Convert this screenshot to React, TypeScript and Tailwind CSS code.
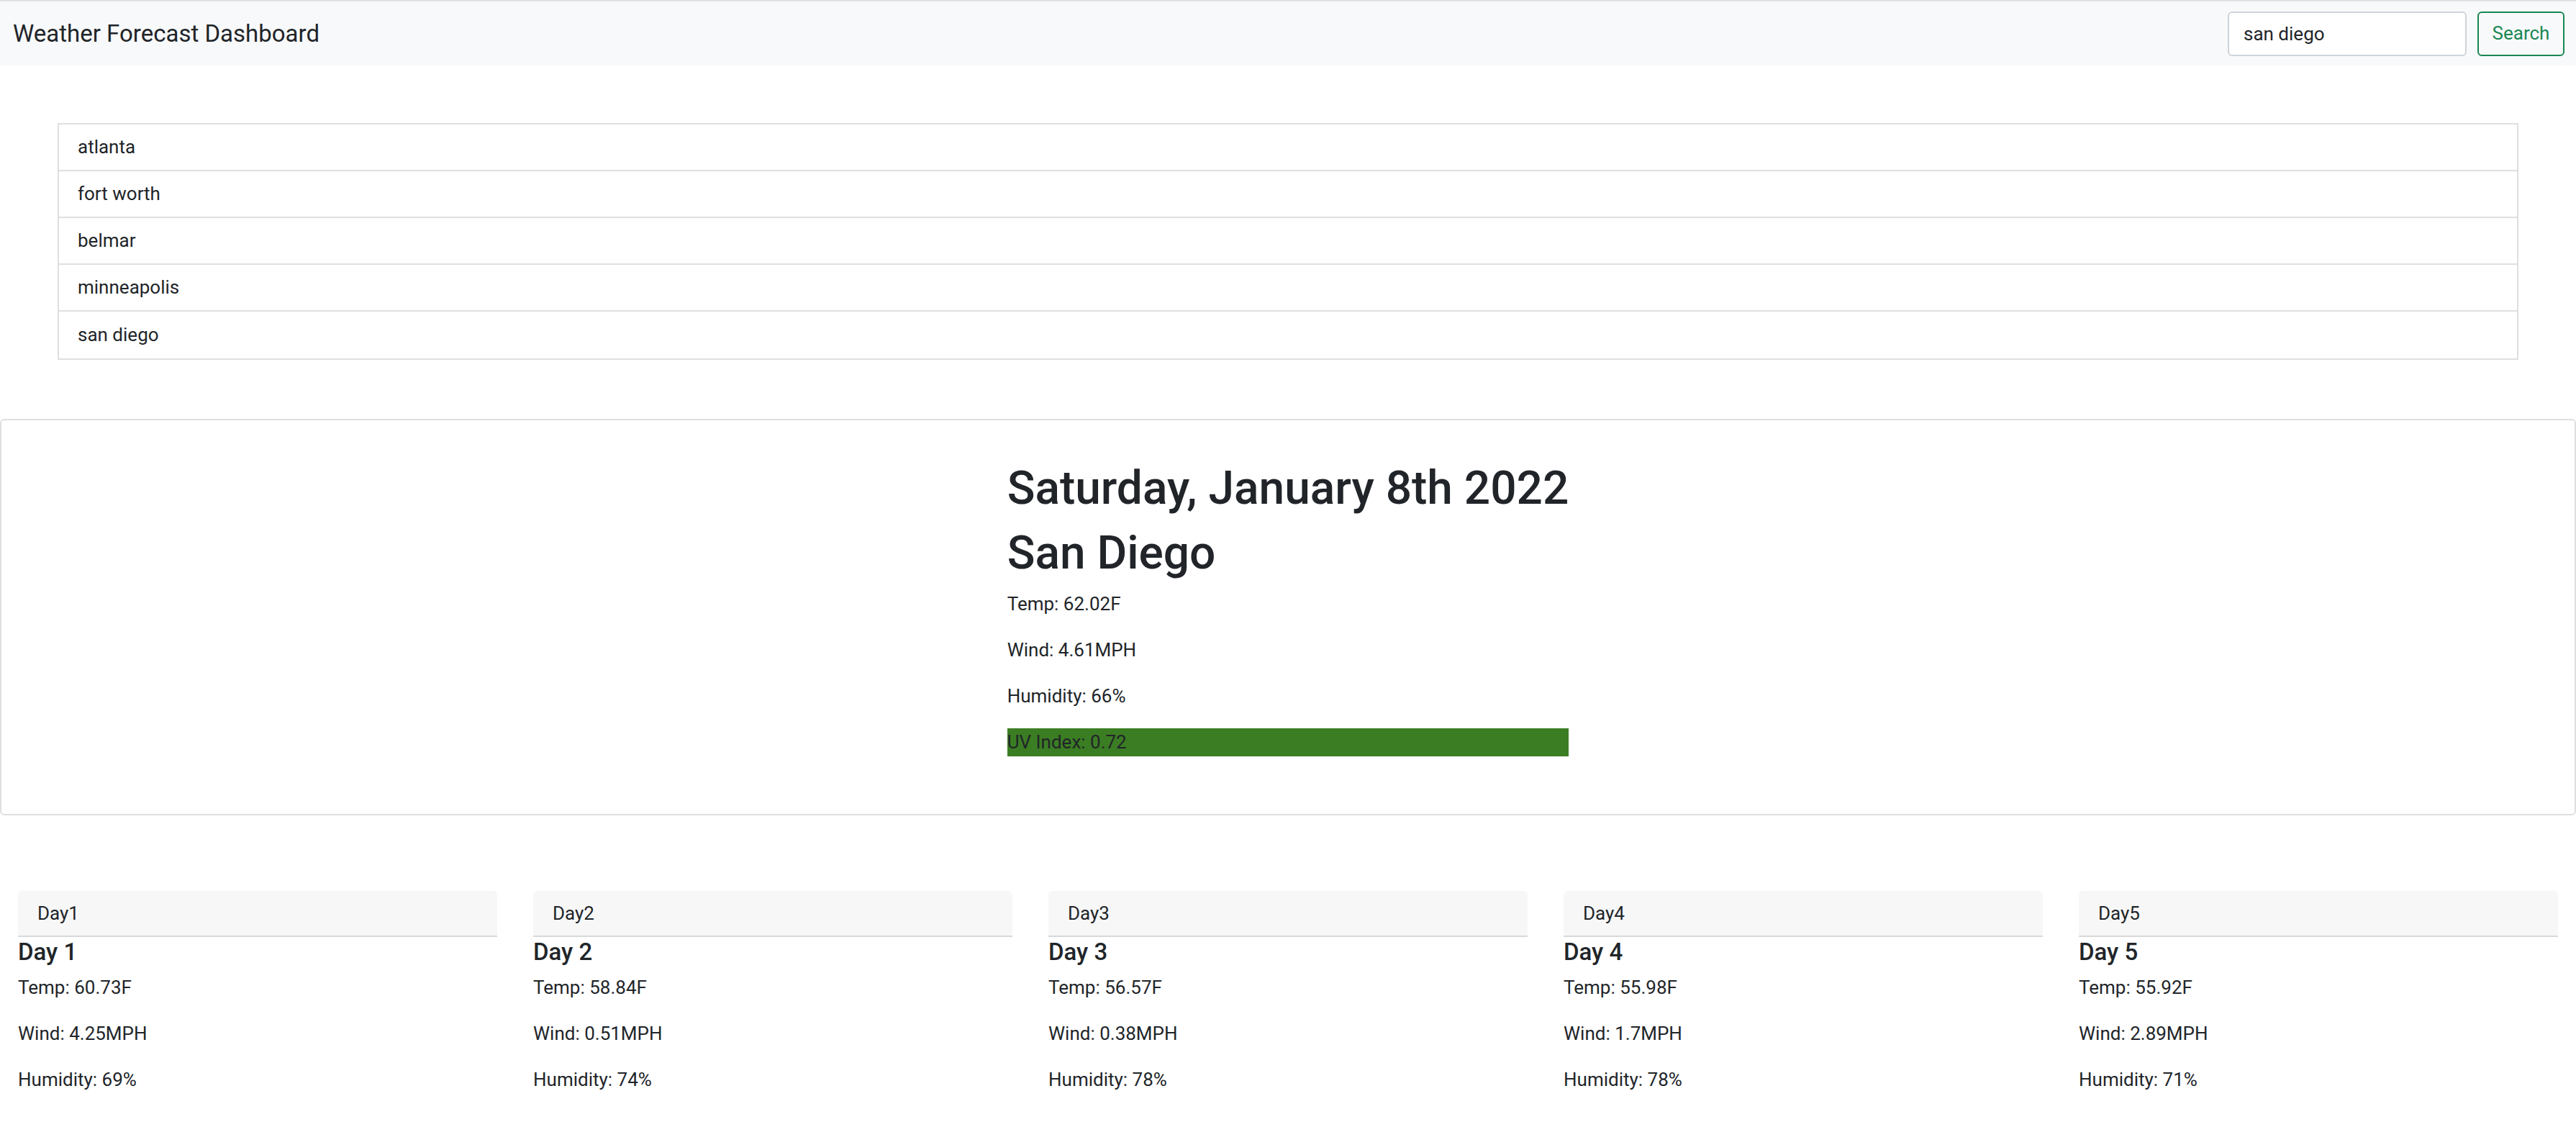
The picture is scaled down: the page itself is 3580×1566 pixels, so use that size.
import React from 'react';

interface Forecast {
  label: string;
  temp: string;
  wind: string;
  humidity: string;
}

const cities = ['atlanta', 'fort worth', 'belmar', 'minneapolis', 'san diego'];

const forecast: Forecast[] = [
  { label: '1', temp: '60.73F', wind: '4.25MPH', humidity: '69%' },
  { label: '2', temp: '58.84F', wind: '0.51MPH', humidity: '74%' },
  { label: '3', temp: '56.57F', wind: '0.38MPH', humidity: '78%' },
  { label: '4', temp: '55.98F', wind: '1.7MPH', humidity: '78%' },
  { label: '5', temp: '55.92F', wind: '2.89MPH', humidity: '71%' },
];

export default function App() {
  return (
    <div className="min-h-screen bg-white font-['Roboto',sans-serif] text-[#212529]">
      {/* Navbar */}
      <nav className="flex h-[91px] items-center justify-between border-t-2 border-[#dee2e6] bg-[#f8f9fa] pl-[18px] pr-[16px]">
        <span className="text-[33px] leading-none">Weather Forecast Dashboard</span>
        <form className="flex items-center gap-[15px]" onSubmit={(e) => e.preventDefault()}>
          <input
            readOnly
            value="san diego"
            className="h-[62px] w-[332px] rounded-[6px] border-2 border-[#ced4da] bg-white px-[20px] text-[26px] text-[#212529] outline-none"
          />
          <button
            type="submit"
            className="h-[62px] w-[121px] rounded-[6px] border-2 border-[#198754] text-[26px] text-[#198754]"
          >
            Search
          </button>
        </form>
      </nav>

      {/* Search history */}
      <ul className="mx-[80px] mt-[80px] border-2 border-[#dfdfdf]">
        {cities.map((city, i) => (
          <li
            key={city}
            className={`flex h-[65px] items-center px-[26px] text-[26px] ${i < cities.length - 1 ? 'border-b-2 border-[#dfdfdf]' : ''}`}
          >
            {city}
          </li>
        ))}
      </ul>

      {/* Current weather */}
      <section className="mt-[82px] flex justify-center rounded-[6px] border-2 border-[#dfdfdf] pt-[56px] pb-[55px]">
        <div className="w-fit">
          <h1 className="mb-[13px] text-[64px] font-medium leading-[77px]">Saturday, January 8th 2022</h1>
          <h1 className="mb-[13px] text-[64px] font-medium leading-[77px]">San Diego</h1>
          <p className="mb-[25px] text-[26px] leading-[39px]">Temp: 62.02F</p>
          <p className="mb-[25px] text-[26px] leading-[39px]">Wind: 4.61MPH</p>
          <p className="mb-[25px] text-[26px] leading-[39px]">Humidity: 66%</p>
          <p className="mb-[25px] bg-[#3b7d23] text-[26px] leading-[39px]">UV Index: 0.72</p>
        </div>
      </section>

      {/* 5 day forecast */}
      <div className="mt-[105px] flex gap-[50px] px-[25px]">
        {forecast.map((day) => (
          <div key={day.label} className="flex-1">
            <div className="flex h-[64px] items-center rounded-t-[6px] border-b-2 border-[#d9d9d9] bg-[#f7f7f7] pl-[27px] text-[26px]">
              Day{day.label}
            </div>
            <h5 className="mt-[1px] mb-[10px] text-[33px] font-medium leading-[40px]">Day {day.label}</h5>
            <p className="mb-[25px] text-[26px] leading-[39px]">Temp: {day.temp}</p>
            <p className="mb-[25px] text-[26px] leading-[39px]">Wind: {day.wind}</p>
            <p className="mb-[25px] text-[26px] leading-[39px]">Humidity: {day.humidity}</p>
          </div>
        ))}
      </div>
    </div>
  );
}
